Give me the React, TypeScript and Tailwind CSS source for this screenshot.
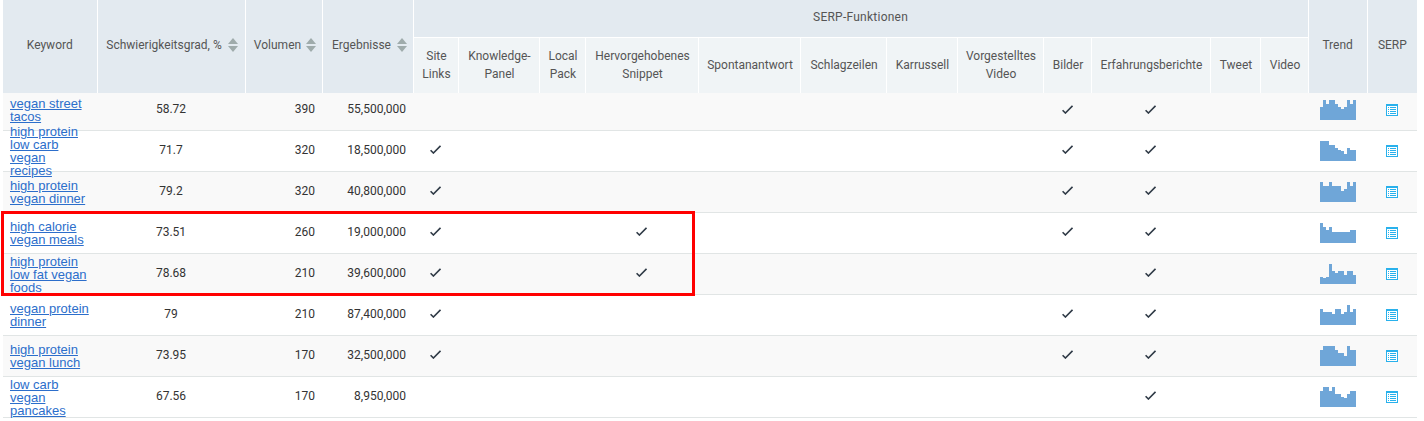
import React from "react";

type Row = {
  keyword: string;
  difficulty: string;
  volume: string;
  results: string;
  checks: number[];
  trend: number[];
};

// index der SERP-Spalte: 0 Site Links, 3 Snippet, 8 Bilder, 9 Erfahrungsberichte
const rows: Row[] = [
  { keyword: "vegan street tacos", difficulty: "58.72", volume: "390", results: "55,500,000", checks: [8, 9], trend: [13, 20, 16, 20, 20, 16, 13, 11, 13, 20, 16, 20] },
  { keyword: "high protein low carb vegan recipes", difficulty: "71.7", volume: "320", results: "18,500,000", checks: [0, 8, 9], trend: [20, 20, 20, 16, 16, 13, 11, 10, 7, 13, 11, 11] },
  { keyword: "high protein vegan dinner", difficulty: "79.2", volume: "320", results: "40,800,000", checks: [0, 8, 9], trend: [20, 16, 16, 20, 16, 16, 16, 11, 13, 20, 16, 20] },
  { keyword: "high calorie vegan meals", difficulty: "73.51", volume: "260", results: "19,000,000", checks: [0, 3, 8, 9], trend: [20, 16, 13, 16, 11, 11, 11, 11, 11, 11, 13, 13] },
  { keyword: "high protein low fat vegan foods", difficulty: "78.68", volume: "210", results: "39,600,000", checks: [0, 3, 9], trend: [7, 6, 7, 20, 13, 11, 13, 13, 9, 13, 13, 9] },
  { keyword: "vegan protein dinner", difficulty: "79", volume: "210", results: "87,400,000", checks: [0, 8, 9], trend: [16, 13, 13, 13, 11, 16, 16, 11, 13, 20, 13, 16] },
  { keyword: "high protein vegan lunch", difficulty: "73.95", volume: "170", results: "32,500,000", checks: [0, 8, 9], trend: [16, 20, 20, 20, 20, 16, 13, 13, 10, 20, 16, 16] },
  { keyword: "low carb vegan pancakes", difficulty: "67.56", volume: "170", results: "8,950,000", checks: [9], trend: [16, 20, 20, 16, 20, 13, 13, 10, 9, 13, 16, 16] },
];

const serpHeaders = [
  "Site Links",
  "Knowledge-Panel",
  "Local Pack",
  "Hervorgehobenes Snippet",
  "Spontanantwort",
  "Schlagzeilen",
  "Karrussell",
  "Vorgestelltes Video",
  "Bilder",
  "Erfahrungsberichte",
  "Tweet",
  "Video",
];

const colWidths = [94, 148, 77, 91, 45, 81, 46, 113, 102, 86, 71, 86, 48, 119, 50, 48, 59, 50];

const SortIcon = () => (
  <svg width="10" height="14" viewBox="0 0 10 14" className="shrink-0 fill-[#9fabab]">
    <path d="M5 0l5 6H0z" />
    <path d="M0 8h10l-5 6z" />
  </svg>
);

const CheckIcon = () => (
  <svg width="11" height="9" viewBox="0 0 11 9" className="mx-auto block fill-none stroke-[#2f3a46] stroke-[1.6]">
    <path d="M0.6 5.2L3.4 8L10.5 0.8" />
  </svg>
);

const Sparkline = ({ data }: { data: number[] }) => (
  <svg width="36" height="20" viewBox="0 0 36 20" className="mx-auto block fill-[#6fa6d8]" shapeRendering="crispEdges">
    {data.map((h, i) => (
      <rect key={i} x={i * 3} y={20 - h} width="3" height={h} />
    ))}
  </svg>
);

const SerpIcon = () => (
  <svg width="12" height="12" viewBox="0 0 12 12" className="mx-auto block" shapeRendering="crispEdges">
    <rect width="12" height="12" fill="#29b1ec" />
    <rect x="1" y="2" width="10" height="9" fill="#fff" />
    <path d="M2 3h1v1H2zM2 5h1v1H2zM2 7h1v1H2zM2 9h1v1H2z" fill="#29b1ec" />
    <path d="M4 3h6v1H4zM4 5h6v1H4zM4 7h6v1H4zM4 9h6v1H4z" fill="#29b1ec" />
  </svg>
);

const mainHead = "border-r border-white bg-[#e3eaf0] font-normal text-[#555] align-middle pb-1";
const subHead = "border-r border-white bg-[#f0f4f6] pl-[5px] pr-[3px] font-normal leading-[18px] text-[#555] align-middle";
const linkClass = "block w-[80px] font-['Liberation_Sans',sans-serif] text-[13px] leading-[13px] text-[#2c6ecb] underline";

export default function App() {
  return (
    <div className="h-[421px] w-[1424px] overflow-hidden bg-white pl-[3px] font-['Roboto',sans-serif] text-xs text-[#333]">
      <div className="relative w-[1414px]">
        <table className="w-[1414px] table-fixed border-collapse">
          <colgroup>
            {colWidths.map((w, i) => (
              <col key={i} style={{ width: w }} />
            ))}
          </colgroup>
          <thead>
            <tr className="h-[37px]">
              <th rowSpan={2} className={mainHead}>Keyword</th>
              <th rowSpan={2} className={mainHead}>
                <div className="flex items-center justify-center gap-[6px] pl-[2px]">Schwierigkeitsgrad, % <SortIcon /></div>
              </th>
              <th rowSpan={2} className={mainHead}>
                <div className="flex items-center justify-center gap-[5px] pl-[3px]">Volumen <SortIcon /></div>
              </th>
              <th rowSpan={2} className={mainHead}>
                <div className="flex items-center justify-center gap-[6px] pl-[4px]">Ergebnisse <SortIcon /></div>
              </th>
              <th colSpan={12} className="border-b border-r border-white bg-[#e3eaf0] pb-[2px] font-normal tracking-[0.25px] text-[#555]">SERP-Funktionen</th>
              <th rowSpan={2} className={mainHead}>Trend</th>
              <th rowSpan={2} className="bg-[#e3eaf0] pb-1 font-normal text-[#555]">SERP</th>
            </tr>
            <tr className="h-[56px]">
              {serpHeaders.map((label) => (
                <th key={label} className={subHead}>{label}</th>
              ))}
            </tr>
          </thead>
          <tbody>
            {rows.map((row, idx) => {
              const textPad = idx === 0 ? "pb-[5px]" : "pb-[2px]";
              const checkPad = idx === 0 ? "pb-[5px]" : "pb-[3px]";
              const iconPad = idx === 0 ? "pb-[3px]" : "";
              return (
                <tr key={row.keyword} className={`border-b border-[#e1e5e5] ${idx % 2 === 0 ? "bg-[#f9f9f9]" : "bg-white"}`}>
                  <td className="p-0 pl-[7px]">
                    <div className={`flex items-center ${idx === 0 ? "h-[37px]" : "h-[40px]"}`}>
                      <a href="#" className={`${linkClass} ${idx === 0 ? "mb-[4px]" : ""}`}>
                        {row.keyword}
                      </a>
                    </div>
                  </td>
                  <td className={`p-0 text-center ${textPad}`}>{row.difficulty}</td>
                  <td className={`p-0 pr-[7px] text-right ${textPad}`}>{row.volume}</td>
                  <td className={`p-0 pr-[7px] text-right ${textPad}`}>{row.results}</td>
                  {serpHeaders.map((label, i) => (
                    <td key={label} className={`p-0 ${checkPad}`}>{row.checks.includes(i) && <CheckIcon />}</td>
                  ))}
                  <td className={`p-0 ${iconPad}`}><Sparkline data={row.trend} /></td>
                  <td className={`p-0 ${iconPad}`}><SerpIcon /></td>
                </tr>
              );
            })}
            <tr>
              <td className="p-0 pl-[7px]">
                <div className="h-[40px]">
                  <a href="#" className={linkClass}>vegan</a>
                </div>
              </td>
            </tr>
          </tbody>
        </table>
        {/* rote Markierung */}
        <div className="pointer-events-none absolute left-[-2px] top-[211px] h-[85px] w-[694px] border-[3px] border-[#ff0000]" />
      </div>
    </div>
  );
}
